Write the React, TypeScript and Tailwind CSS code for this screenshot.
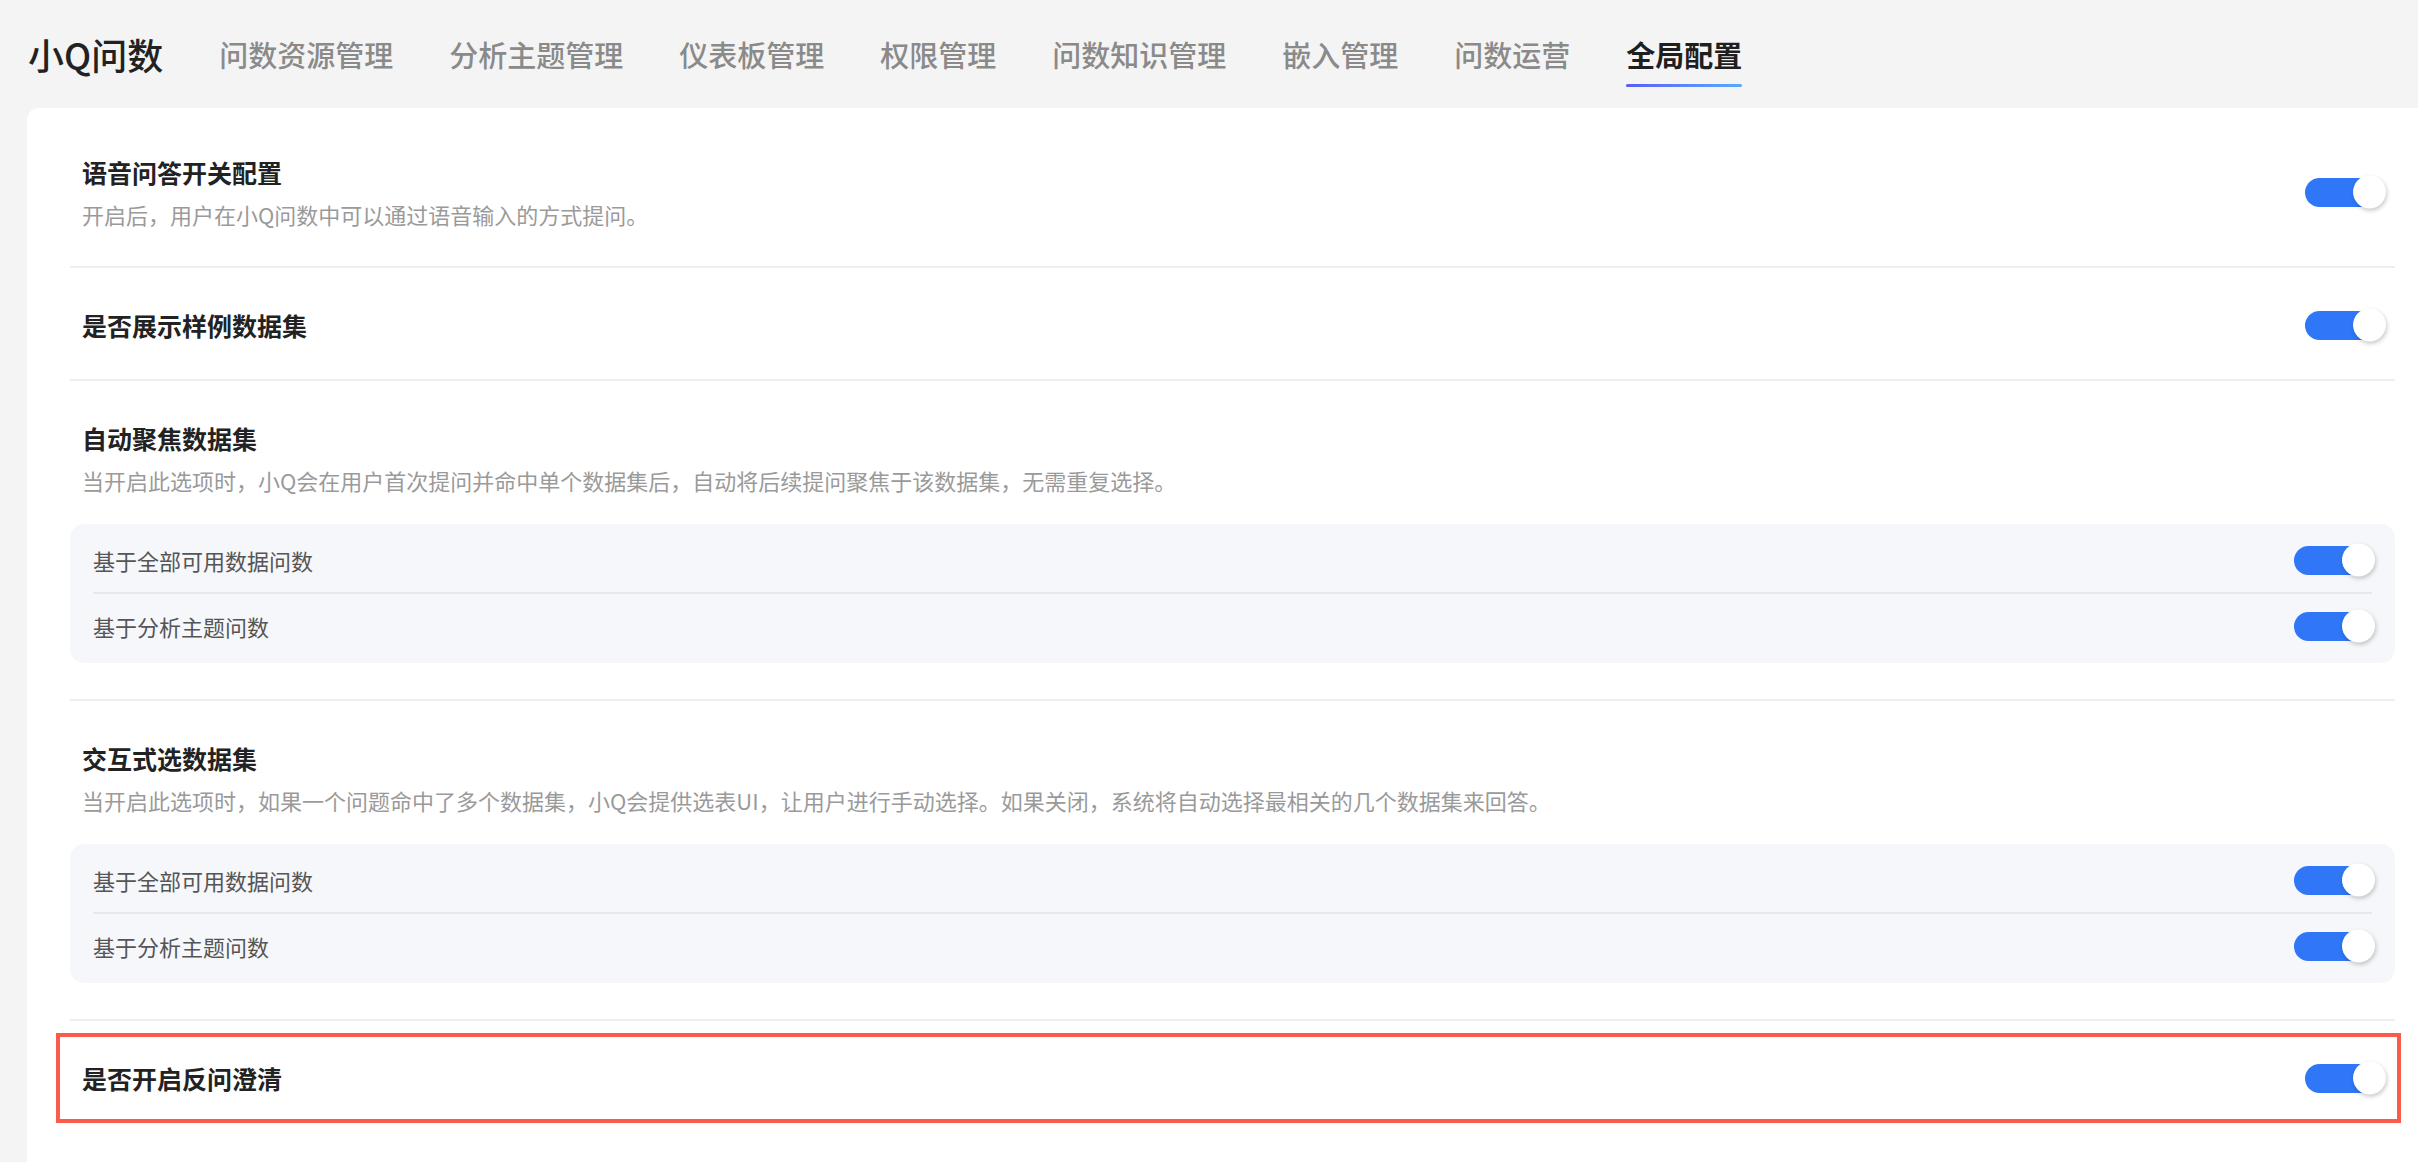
import React from 'react';

const tabs = ['问数资源管理', '分析主题管理', '仪表板管理', '权限管理', '问数知识管理', '嵌入管理', '问数运营', '全局配置'];

const subOptions = ['基于全部可用数据问数', '基于分析主题问数'];

const Toggle: React.FC = () => (
  <div className="relative h-[29px] w-[78px] shrink-0 rounded-full bg-[#2f77f7]">
    <div className="absolute right-[-3px] top-1/2 h-[33px] w-[33px] -translate-y-1/2 rounded-full bg-white shadow-[1px_2px_4px_rgba(0,0,0,0.22)]" />
  </div>
);

const SubPanel: React.FC = () => (
  <div className="mt-[28px] rounded-[14px] bg-[#f5f7fa] px-[23px] pt-[4px] pb-[5px]">
    {subOptions.map((label, i) => (
      <div key={label} className={i === 0 ? 'border-b-2 border-[#e6e8ec]' : ''}>
        <div className="flex h-[64px] items-center justify-between">
          <span className="text-[22px] text-[#555555]">{label}</span>
          <Toggle />
        </div>
      </div>
    ))}
  </div>
);

interface SectionProps {
  title: string;
  desc?: string;
  toggle?: boolean;
  panel?: boolean;
  last?: boolean;
  highlight?: boolean;
}

const Section: React.FC<SectionProps> = ({ title, desc, toggle, panel, last, highlight }) => (
  <div className={`relative pt-[39px] pb-[36px] ${last ? '' : 'border-b-2 border-[#eeeeee]'}`}>
    <div className="flex items-center justify-between pl-[12px] pr-[12px]">
      <div>
        <div className="text-[25px] leading-[36px] font-semibold text-[#222222]">{title}</div>
        {desc && <div className="mt-[8px] text-[22px] leading-[32px] text-[#9a9a9a]">{desc}</div>}
      </div>
      {toggle && <Toggle />}
    </div>
    {panel && <SubPanel />}
    {highlight && (
      <div className="pointer-events-none absolute top-[12px] bottom-[9px] left-[-14px] right-[-6px] border-4 border-[#fa5b4b]" />
    )}
  </div>
);

export default function App() {
  return (
    <div
      className="flex h-[1162px] flex-col overflow-hidden bg-[#f4f4f4]"
      style={{ fontFamily: '"Noto Sans CJK SC", "Noto Sans", sans-serif' }}
    >
      <div className="flex h-[108px] shrink-0 items-center gap-[56px] pl-[28px]">
        <span className="text-[36px] leading-[48px] font-medium text-[#222222]">小Q问数</span>
        {tabs.map((tab) => {
          const active = tab === '全局配置';
          return (
            <span
              key={tab}
              className={`relative text-[29px] leading-[40px] ${active ? 'font-semibold text-[#1f1f1f]' : 'font-medium text-[#8a8a8a]'}`}
            >
              {tab}
              {active && (
                <span className="absolute left-0 right-0 top-[50px] h-[3px] rounded-full bg-linear-to-r from-[#5b5cf6] to-[#5aa9fc]" />
              )}
            </span>
          );
        })}
      </div>

      <div className="ml-[27px] flex-1 rounded-tl-[12px] bg-white pt-[7px] pl-[43px] pr-[23px]">
        <Section title="语音问答开关配置" desc="开启后，用户在小Q问数中可以通过语音输入的方式提问。" toggle />
        <Section title="是否展示样例数据集" toggle />
        <Section
          title="自动聚焦数据集"
          desc="当开启此选项时，小Q会在用户首次提问并命中单个数据集后，自动将后续提问聚焦于该数据集，无需重复选择。"
          panel
        />
        <Section
          title="交互式选数据集"
          desc="当开启此选项时，如果一个问题命中了多个数据集，小Q会提供选表UI，让用户进行手动选择。如果关闭，系统将自动选择最相关的几个数据集来回答。"
          panel
        />
        <Section title="是否开启反问澄清" toggle last highlight />
      </div>
    </div>
  );
}
